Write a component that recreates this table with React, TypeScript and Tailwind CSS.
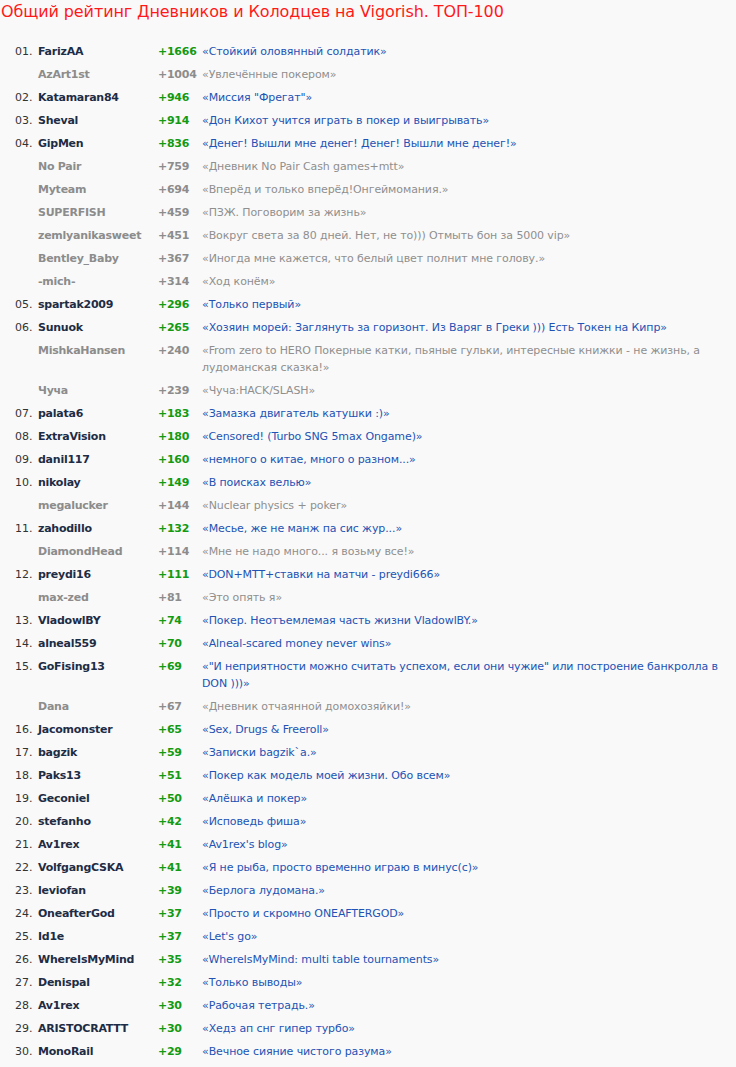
import React from "react";

type Row = { r?: string; n: string; s: string; t: string };

const rows: Row[] = [
  { r: "01.", n: "FarizAA", s: "+1666", t: "«Стойкий оловянный солдатик»" },
  { n: "AzArt1st", s: "+1004", t: "«Увлечённые покером»" },
  { r: "02.", n: "Katamaran84", s: "+946", t: "«Миссия \"Фрегат\"»" },
  { r: "03.", n: "Sheval", s: "+914", t: "«Дон Кихот учится играть в покер и выигрывать»" },
  { r: "04.", n: "GipMen", s: "+836", t: "«Денег! Вышли мне денег! Денег! Вышли мне денег!»" },
  { n: "No Pair", s: "+759", t: "«Дневник No Pair Cash games+mtt»" },
  { n: "Myteam", s: "+694", t: "«Вперёд и только вперёд!Онгеймомания.»" },
  { n: "SUPERFISH", s: "+459", t: "«ПЗЖ. Поговорим за жизнь»" },
  { n: "zemlyanikasweet", s: "+451", t: "«Вокруг света за 80 дней. Нет, не то))) Отмыть бон за 5000 vip»" },
  { n: "Bentley_Baby", s: "+367", t: "«Иногда мне кажется, что белый цвет полнит мне голову.»" },
  { n: "-mich-", s: "+314", t: "«Ход конём»" },
  { r: "05.", n: "spartak2009", s: "+296", t: "«Только первый»" },
  { r: "06.", n: "Sunuok", s: "+265", t: "«Хозяин морей: Заглянуть за горизонт. Из Варяг в Греки ))) Есть Токен на Кипр»" },
  { n: "MishkaHansen", s: "+240", t: "«From zero to HERO Покерные катки, пьяные гульки, интересные книжки - не жизнь, а лудоманская сказка!»" },
  { n: "Чуча", s: "+239", t: "«Чуча:HACK/SLASH»" },
  { r: "07.", n: "palata6", s: "+183", t: "«Замазка двигатель катушки :)»" },
  { r: "08.", n: "ExtraVision", s: "+180", t: "«Censored! (Turbo SNG 5max Ongame)»" },
  { r: "09.", n: "danil117", s: "+160", t: "«немного о китае, много о разном...»" },
  { r: "10.", n: "nikolay", s: "+149", t: "«В поисках велью»" },
  { n: "megalucker", s: "+144", t: "«Nuclear physics + poker»" },
  { r: "11.", n: "zahodillo", s: "+132", t: "«Месье, же не манж па сис жур...»" },
  { n: "DiamondHead", s: "+114", t: "«Мне не надо много... я возьму все!»" },
  { r: "12.", n: "preydi16", s: "+111", t: "«DON+MTT+ставки на матчи - preydi666»" },
  { n: "max-zed", s: "+81", t: "«Это опять я»" },
  { r: "13.", n: "VladowlBY", s: "+74", t: "«Покер. Неотъемлемая часть жизни VladowlBY.»" },
  { r: "14.", n: "alneal559", s: "+70", t: "«Alneal-scared money never wins»" },
  { r: "15.", n: "GoFising13", s: "+69", t: "«\"И неприятности можно считать успехом, если они чужие\" или построение банкролла в DON )))»" },
  { n: "Dana", s: "+67", t: "«Дневник отчаянной домохозяйки!»" },
  { r: "16.", n: "Jacomonster", s: "+65", t: "«Sex, Drugs & Freeroll»" },
  { r: "17.", n: "bagzik", s: "+59", t: "«Записки bagzik`a.»" },
  { r: "18.", n: "Paks13", s: "+51", t: "«Покер как модель моей жизни. Обо всем»" },
  { r: "19.", n: "Geconiel", s: "+50", t: "«Алёшка и покер»" },
  { r: "20.", n: "stefanho", s: "+42", t: "«Исповедь фиша»" },
  { r: "21.", n: "Av1rex", s: "+41", t: "«Av1rex's blog»" },
  { r: "22.", n: "VolfgangCSKA", s: "+41", t: "«Я не рыба, просто временно играю в минус(с)»" },
  { r: "23.", n: "leviofan", s: "+39", t: "«Берлога лудомана.»" },
  { r: "24.", n: "OneafterGod", s: "+37", t: "«Просто и скромно ONEAFTERGOD»" },
  { r: "25.", n: "Id1e", s: "+37", t: "«Let's go»" },
  { r: "26.", n: "WhereIsMyMind", s: "+35", t: "«WhereIsMyMind: multi table tournaments»" },
  { r: "27.", n: "Denispal", s: "+32", t: "«Только выводы»" },
  { r: "28.", n: "Av1rex", s: "+30", t: "«Рабочая тетрадь.»" },
  { r: "29.", n: "ARISTOCRATTT", s: "+30", t: "«Хедз ап снг гипер турбо»" },
  { r: "30.", n: "MonoRail", s: "+29", t: "«Вечное сияние чистого разума»" },
];

export default function App() {
  return (
    <div
      className="min-h-[1067px] w-[736px] bg-[#f9f9f9] text-[11px] leading-[17px]"
      style={{ fontFamily: '"DejaVu Sans", Verdana, sans-serif' }}
    >
      <h1 className="pl-[1px] pt-[1px] text-[16px] leading-[22px] font-normal tracking-[-0.1px] text-[#ff1a1a]">
        Общий рейтинг Дневников и Колодцев на Vigorish. ТОП-100
      </h1>
      <div className="mt-[17px] flex flex-col">
        {rows.map((row, i) => {
          const main = !!row.r;
          return (
            <div key={i} className="flex py-[3px]">
              <div className="w-[38px] shrink-0 pl-[15px] text-[#333333]">{row.r ?? ""}</div>
              <div
                className={
                  "w-[120px] shrink-0 font-bold tracking-[-0.25px] " +
                  (main ? "text-[#1e2c45]" : "text-[#8c8c8c]")
                }
              >
                {row.n}
              </div>
              <div
                className={
                  "w-[44px] shrink-0 font-bold tracking-[-0.25px] " +
                  (main ? "text-[#139a13]" : "text-[#8c8c8c]")
                }
              >
                {row.s}
              </div>
              <div
                className={
                  "flex-1 pr-[3px] tracking-[-0.1px] " + (main ? "text-[#2253b4]" : "text-[#8f8f8f]")
                }
              >
                {row.t}
              </div>
            </div>
          );
        })}
      </div>
    </div>
  );
}
